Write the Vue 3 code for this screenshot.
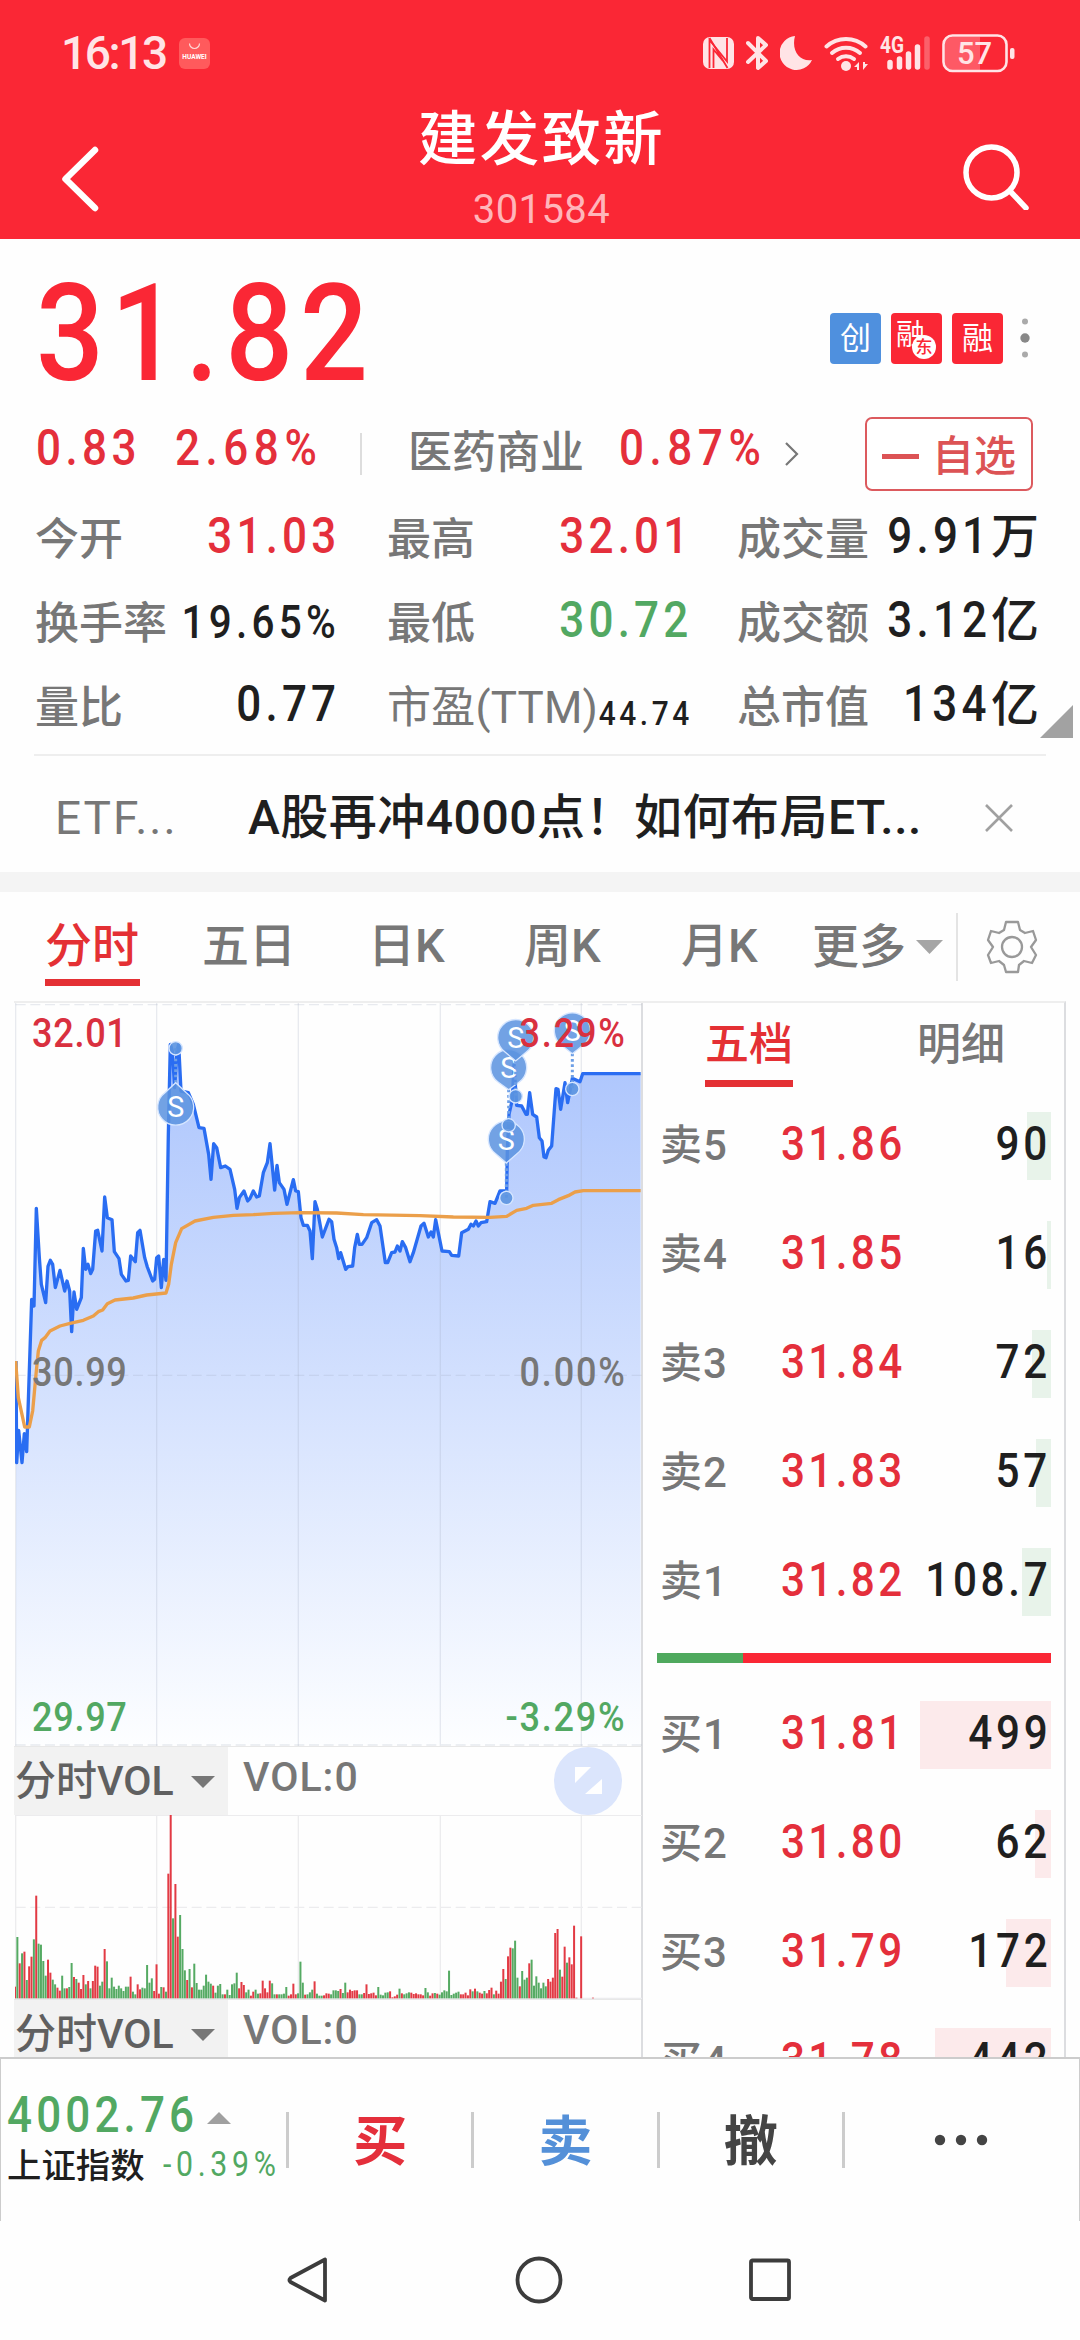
<template>
  <div class="page">
    <header class="header">
      <div class="status-bar">
        <span class="status-time">16:13</span>
        <svg class="app-badge" width="31" height="31" viewBox="0 0 31 31">
          <rect width="31" height="31" rx="6" fill="#ff5a5c" />
          <path d="M10.500 5.500a5 5 0 0 0 10 0" fill="none" stroke="#ffd9d6" stroke-width="1.200" />
          <text x="15.500" y="20.500" text-anchor="middle" class="badge-text">HUAWEI</text>
        </svg>
        <div class="status-icons">
          <svg class="ic-nfc" width="31" height="34" viewBox="0 0 31 34">
            <rect x="0" y="1" width="31" height="32" rx="7" fill="#ffe4e6" />
            <path d="M6.500 32V4L24 25.500V2" fill="none" stroke="#fa2735" stroke-width="1.800" />
            <path d="M6.500 2L24.500 32M10.500 32V13.500L20 25" fill="none" stroke="#fa2735" stroke-width="1.800" />
          </svg>
          <svg class="ic-bt" width="22" height="36" viewBox="0 0 22 36">
            <path d="M2 8l18 18-8 7V3l8 7L2 27" fill="none" stroke="#ffe4e6" stroke-width="4" stroke-linejoin="round" stroke-linecap="round" />
          </svg>
          <svg class="ic-moon" width="33" height="36" viewBox="0 0 33 36">
            <path d="M15 1A17 17 0 1 0 32 25C20 27 11 16 15 1z" fill="#ffe4e6" />
          </svg>
          <svg class="ic-wifi" width="45" height="36" viewBox="0 0 45 36">
            <g fill="none" stroke="#ffe4e6" stroke-width="4" stroke-linecap="round">
              <path d="M2.500 11.500a29 29 0 0 1 39 0" />
              <path d="M8 18a21 21 0 0 1 28 0" />
              <path d="M14 24a13 13 0 0 1 16 0" />
            </g>
            <circle cx="22" cy="31" r="5" fill="#ffe4e6" />
            <path d="M30 32l5-5v8h-2v-3zM44 29l-5 6v-8h2v2z" fill="#ffe4e6" />
          </svg>
          <svg class="ic-signal" width="51" height="36" viewBox="0 0 51 36">
            <text x="0" y="17.500" class="net-text" textLength="24" lengthAdjust="spacingAndGlyphs">4G</text>
            <g stroke="#ffe4e6" stroke-width="5.500" stroke-linecap="round">
              <path d="M10 27.500V32M19.500 24V32M28.500 19V32M37.500 12V32" />
              <path d="M47 4V32" opacity=".3" />
            </g>
          </svg>
          <svg class="ic-battery" width="74" height="39" viewBox="0 0 74 39">
            <path d="M10 3H38V36H10A7 7 0 0 1 3 29V10A7 7 0 0 1 10 3z" fill="#ff6b75" opacity=".75" />
            <rect x="1.500" y="1.500" width="63" height="35.500" rx="9" fill="none" stroke="#ffe4e6" stroke-width="2.600" />
            <rect x="68" y="14" width="4.500" height="11" rx="2" fill="#ffe4e6" />
            <text x="32.500" y="30" text-anchor="middle" class="battery-text">57</text>
          </svg>
        </div>
      </div>
      <div class="title-bar">
        <svg class="back" width="60" height="70" viewBox="0 0 60 70">
          <path d="M36 6L6.500 35L36 64" fill="none" stroke="#fff" stroke-width="6.500" stroke-linecap="round" stroke-linejoin="round" />
        </svg>
        <div class="title-box">
          <h1>建发致新</h1>
          <span class="code">301584</span>
        </div>
        <svg class="search" width="68" height="68" viewBox="0 0 68 68">
          <circle cx="30.500" cy="30.500" r="25.500" fill="none" stroke="#fff" stroke-width="5.500" />
          <path d="M49 49L65 66" stroke="#fff" stroke-width="5.500" stroke-linecap="round" />
        </svg>
      </div>
    </header>

    <section class="quote">
      <div class="price-row">
        <span class="price narrow">31.82</span>
        <div class="tags">
          <span class="tag blue">创</span>
          <span class="tag small">融<i>东</i></span>
          <span class="tag">融</span>
          <svg width="10" height="44" viewBox="0 0 10 44">
            <circle cx="5" cy="5.500" r="3" fill="#aaa" />
            <circle cx="5" cy="22" r="4.700" fill="#888" />
            <circle cx="5" cy="38.500" r="3" fill="#aaa" />
          </svg>
        </div>
      </div>

      <div class="change-row">
        <span class="num narrow up chg">0.83</span>
        <span class="num narrow up pct">2.68%</span>
        <i class="bar-line"></i>
        <span class="sector">医药商业</span>
        <span class="num narrow up sector-pct">0.87%</span>
        <svg class="arrow" width="16" height="26" viewBox="0 0 16 26">
          <path d="M2 2L13 13L2 24" fill="none" stroke="#777" stroke-width="2.200" />
        </svg>
        <button class="fav"><i></i>自选</button>
      </div>

      <div class="stats">
        <div v-for="s in stats" :key="s.label" class="stat">
          <span class="stat-label" :class="{ ttm: s.tiny }">{{ s.label }}</span>
          <span class="stat-value" :class="[s.tone, { mid: s.mid, tiny: s.tiny }]"><em class="narrow">{{ s.value }}</em><b v-if="s.unit">{{ s.unit }}</b></span>
        </div>
        <svg class="corner" width="33" height="33" viewBox="0 0 33 33"><path d="M33 0V33H0z" fill="#a2a2a2" /></svg>
      </div>

      <div class="news">
        <span class="news-tag">ETF...</span>
        <span class="news-title">A股再冲4000点！如何布局ET...</span>
        <svg width="30" height="30" viewBox="0 0 30 30">
          <path d="M2 2L28 28M28 2L2 28" stroke="#a0a0a0" stroke-width="2.600" />
        </svg>
      </div>
    </section>

    <nav class="tabs">
      <span v-for="(t, i) in tabs" :key="t" class="tab" :class="{ active: i === 0 }">{{ t }}</span>
      <span class="more">更多</span>
      <svg class="more-arrow" width="27" height="14" viewBox="0 0 27 14"><path d="M0 0H27L13.500 14z" fill="#a5a5a5" /></svg>
      <i class="tab-line"></i>
      <svg class="gear" width="52" height="54" viewBox="0 0 52 54">
        <path d="M20 2H32L34 10L39 13L47 11L50 20L45 27L50 35L46 43L38 41L33 45L32 52H20L18 45L13 41L5 43L2 35L7 27L2 20L5 11L13 13L18 10z" fill="none" stroke="#999" stroke-width="2.300" stroke-linejoin="round" />
        <circle cx="26" cy="27" r="10" fill="none" stroke="#999" stroke-width="2.300" />
      </svg>
    </nav>

    <main class="board">
      <section class="charts">
        <div class="chart-box">
          <!-- units are thirds of a pixel -->
          <svg width="627" height="743" viewBox="45 36 1881 2229">
            <defs>
              <linearGradient id="fade" x1="0" y1="248" x2="0" y2="2265" gradientUnits="userSpaceOnUse">
                <stop offset="0" stop-color="#afc7fd" />
                <stop offset="1" stop-color="#fdfeff" />
              </linearGradient>
            </defs>
            <polygon :points="area" fill="url(#fade)" />
            <g stroke="#9aa6bb" stroke-opacity=".22" stroke-width="4">
              <path d="M47 36V2265M470 36V2265M895 36V2265M1321 36V2265M1744 36V2265" />
              <path d="M47 41H1926M47 1153H1926M47 2262H1926" stroke-dasharray="30 14" />
            </g>
            <polyline :points="priceLine" fill="none" stroke="#2a6df2" stroke-width="10" stroke-linejoin="round" />
            <polyline :points="avgLine" fill="none" stroke="#eb9f4a" stroke-width="10" stroke-linejoin="round" />
            <g v-for="m in marks" :key="m.x + '-' + m.y">
              <path :d="`M${m.x} ${m.tip}V${m.dot}`" stroke="#6d9fe6" stroke-width="9" stroke-dasharray="8 8" />
              <path :d="pin(m)" fill="#5b93e0" fill-opacity=".86" stroke="#d6e6ff" stroke-width="4" />
              <circle :cx="m.x" :cy="m.dot" r="20" fill="#5b93e0" fill-opacity=".9" stroke="#d6e6ff" stroke-width="4" />
              <text :x="m.x" :y="m.y + 31" text-anchor="middle" class="pin-text">S</text>
            </g>
          </svg>
          <span class="axis narrow tl up">32.01</span>
          <span class="axis narrow tr up">3.29%</span>
          <span class="axis narrow ml">30.99</span>
          <span class="axis narrow mr">0.00%</span>
          <span class="axis narrow bl down">29.97</span>
          <span class="axis narrow br down">-3.29%</span>
        </div>

        <div class="ind-head">
          <span class="ind-name">分时VOL<svg width="24" height="12" viewBox="0 0 24 12"><path d="M0 0H24L12 12z" fill="#777" /></svg></span>
          <span class="ind-value">VOL:0</span>
          <span class="expand">
            <svg width="68" height="68" viewBox="0 0 68 68">
              <circle cx="34" cy="34" r="34" fill="#dbe5fc" />
              <path d="M21 20H37L21 36zM48 32V47H31z" fill="#fff" />
            </svg>
          </span>
        </div>
        <svg class="vol" width="627" height="184" viewBox="45 433 1881 552">
          <g stroke="#ececee" stroke-width="4">
            <path d="M47 433V983M470 433V983M895 433V983M1321 433V983M1744 433V983M45 434H1926M45 983H1926" />
            <path d="M47 710H1926" stroke-dasharray="30 14" />
          </g>
          <rect v-for="b in bars" :key="b.x" :x="b.x" :y="983 - b.h" width="6" :height="b.h" :fill="b.color" />
        </svg>
        <div class="ind-head">
          <span class="ind-name">分时VOL<svg width="24" height="12" viewBox="0 0 24 12"><path d="M0 0H24L12 12z" fill="#777" /></svg></span>
          <span class="ind-value">VOL:0</span>
        </div>
      </section>

      <section class="depth">
        <div class="depth-tabs">
          <span class="active">五档</span>
          <span>明细</span>
        </div>
        <div v-for="r in asks" :key="r.name" class="level">
          <span class="lv-name">{{ r.name }}</span>
          <span class="lv-price narrow">{{ r.price }}</span>
          <span class="lv-qty"><i class="sell" :style="{ width: r.w + 'px' }"></i><em class="narrow">{{ r.qty }}</em></span>
        </div>
        <div class="ratio"><i></i></div>
        <div v-for="r in bids" :key="r.name" class="level">
          <span class="lv-name">{{ r.name }}</span>
          <span class="lv-price narrow">{{ r.price }}</span>
          <span class="lv-qty"><i class="buy" :style="{ width: r.w + 'px' }"></i><em class="narrow">{{ r.qty }}</em></span>
        </div>
      </section>
    </main>

    <footer class="trade">
      <div class="index">
        <div class="index-top">
          <span class="narrow">4002.76</span>
          <svg width="24" height="12" viewBox="0 0 24 12"><path d="M12 0L24 12H0z" fill="#a0a0a0" /></svg>
        </div>
        <div class="index-sub">上证指数<span class="narrow">-0.39%</span></div>
      </div>
      <span class="act buy-act">买</span>
      <span class="act sell-act">卖</span>
      <span class="act">撤</span>
      <span class="act dots">
        <svg width="54" height="12" viewBox="0 0 54 12" fill="#444">
          <circle cx="6" cy="6" r="5.200" /><circle cx="27" cy="6" r="5.200" /><circle cx="48" cy="6" r="5.200" />
        </svg>
      </span>
    </footer>

    <div class="sys-nav">
      <svg width="44" height="50" viewBox="0 0 44 50"><path d="M39 4.500V45.500L4.500 27Q2.500 25 4.500 23z" fill="none" stroke="#3c3c3c" stroke-width="3.800" stroke-linejoin="round" /></svg>
      <svg width="50" height="50" viewBox="0 0 50 50"><circle cx="25" cy="25" r="21.500" fill="none" stroke="#3c3c3c" stroke-width="3.800" /></svg>
      <svg width="44" height="46" viewBox="0 0 44 46"><rect x="3" y="3.500" width="38" height="38.500" rx="1.500" fill="none" stroke="#3c3c3c" stroke-width="3.800" /></svg>
    </div>
  </div>
</template>

<script setup>
import { computed } from 'vue'

const stats = [
  { label: '今开', value: '31.03', tone: 'up' },
  { label: '最高', value: '32.01', tone: 'up' },
  { label: '成交量', value: '9.91', unit: '万' },
  { label: '换手率', value: '19.65%', mid: true },
  { label: '最低', value: '30.72', tone: 'down' },
  { label: '成交额', value: '3.12', unit: '亿' },
  { label: '量比', value: '0.77' },
  { label: '市盈(TTM)', value: '44.74', tiny: true },
  { label: '总市值', value: '134', unit: '亿' }
]

const tabs = ['分时', '五日', '日K', '周K', '月K']

const asks = [
  { name: '卖5', price: '31.86', qty: '90', w: 24 },
  { name: '卖4', price: '31.85', qty: '16', w: 4 },
  { name: '卖3', price: '31.84', qty: '72', w: 19 },
  { name: '卖2', price: '31.83', qty: '57', w: 15 },
  { name: '卖1', price: '31.82', qty: '108.7', w: 29 }
]

const bids = [
  { name: '买1', price: '31.81', qty: '499', w: 131 },
  { name: '买2', price: '31.80', qty: '62', w: 16 },
  { name: '买3', price: '31.79', qty: '172', w: 45 },
  { name: '买4', price: '31.78', qty: '442', w: 116 }
]

const priceLine = `48,1110 50,1415 56,1318 66,1415 73,1328 80,1382 95,925 102,945 109,652 118,800 124,880 137,935
144,826 151,808 158,820 166,890 180,838 194,900 201,870 209,900 215,1022 222,903 230,955 244,920 250,772 257,835
264,820 272,848 278,835 287,720 293,718 306,780 314,618 322,680 336,686 343,782 357,803 364,850 378,870 385,868
392,795 406,812 413,725 420,718 434,800 442,828 458,870 464,865 470,800 476,795 484,890 491,805 498,868 505,430
511,160 517,180 524,290 531,180 536,160 543,300 565,305 580,340 597,410 612,412 626,490 633,565 641,458 650,470
662,530 676,525 690,535 704,595 711,652 718,620 732,600 743,630 750,622 760,600 770,618 778,615 790,545 802,515
810,458 824,597 831,523 838,575 852,595 861,640 880,566 887,600 895,602 903,680 910,703 922,703 930,720 937,803
945,632 952,655 967,738 987,685 995,692 1002,745 1010,770 1016,803 1022,785 1037,835 1044,827 1058,825 1064,770
1072,730 1078,760 1086,760 1100,740 1115,695 1130,686 1140,705 1156,815 1163,815 1175,785 1185,783 1192,765
1200,780 1207,752 1217,770 1230,812 1240,785 1263,705 1272,697 1285,738 1293,723 1300,738 1307,686 1326,780
1348,782 1355,793 1376,795 1385,725 1405,715 1413,700 1420,705 1428,690 1435,705 1443,695 1460,692 1470,632
1485,637 1500,600 1520,600 1522,480 1527,370 1537,325 1542,220 1548,310 1550,343 1565,345 1578,370 1582,370
1589,305 1598,370 1610,378 1618,440 1626,450 1632,498 1638,500 1645,478 1655,465 1665,330 1668,293 1674,295
1682,355 1695,275 1703,335 1710,300 1717,262 1740,272 1748,248 1922,248`

const avgLine = `47,1110 55,1220 68,1280 74,1308 88,1308 98,1260 108,1150 115,1080 125,1048 135,1040 150,1020 180,1005
210,997 250,988 280,975 295,962 308,957 322,938 345,927 400,921 440,912 498,906 506,880 514,820 527,755 545,713
585,690 640,679 700,673 760,671 820,667 900,665 1010,666 1090,671 1260,674 1360,678 1470,679 1520,676 1550,658
1580,652 1600,643 1655,637 1675,626 1705,614 1725,603 1750,599 1922,599`

const area = computed(() => `${priceLine} 1922,2262 48,2262`)

// dot: the trade on the line, tip: where the pin points
const marks = [
  { x: 527, y: 348, tip: 275, dot: 172 },
  { x: 1519, y: 445, tip: 516, dot: 621 },
  { x: 1526, y: 230, tip: 296, dot: 403 },
  { x: 1547, y: 140, tip: 210, dot: 316 },
  { x: 1717, y: 120, tip: 188, dot: 294 }
]

function pin({ x, y, tip }) {
  const s = tip > y ? 1 : -1
  const sweep = s > 0 ? 1 : 0
  return `M${x - 32} ${y + s * 43}A54 54 0 1 ${sweep} ${x + 32} ${y + s * 43}L${x} ${tip}z`
}

const volumes = `r35 g184 r105 g135 r140 g55 r96 r125 g177 r308 g164 g161 g112 g68 r116 r77 g56 g42 r32 r23 g68 g30
r30 g34 g106 r64 g58 r47 r28 r70 g42 r52 g30 r52 r98 r95 g38 g50 r148 g111 g30 g62 g35 g28 g38 g30 g22 g35 g35 r65
g20 g12 r42 r27 g32 g30 g100 g47 g60 r22 r102 r14 g34 r33 g20 r374 r550 g240 r343 r185 g250 g148 g84 r55 g88 r33
g104 g46 g26 g26 g38 g71 g50 g44 r38 g17 g38 g43 g12 r12 g26 g10 g42 g45 g77 r30 r49 r40 g18 g26 r8 r20 g26 g14
r15 r53 r30 r18 r53 g45 g12 r12 g12 g12 g14 g34 r8 r12 r44 r12 g15 g110 g47 r11 g12 g18 g26 r51 g14 g8 g8 r9 r15
r14 g12 g24 g24 g22 r28 g16 g47 r18 r26 r22 r24 r24 g12 g12 r16 r42 r13 r15 r17 r9 g34 g11 g9 g17 g18 r21 r3 r6
r11 g29 r15 g12 g15 g18 r17 r13 r15 r12 r12 r9 g31 g18 r8 r15 g16 r14 g11 g18 g24 g21 g83 g10 g14 g17 g20 r12 r12
r17 r9 r27 g21 r29 g21 r17 r14 g22 r15 r25 r32 g12 r23 r14 r50 r88 g58 r126 r152 g150 g173 g62 r36 g82 g56 g62
r105 g116 g38 g66 g47 g30 g47 g36 r58 r50 r62 r196 r208 g86 r65 r155 g107 r123 r102 r218 r2 r0 r186 r0 r0 r0 r0 r2`

const bars = volumes.split(/\s+/).map((v, i) => ({
  x: 42 + i * 7.077,
  h: Number(v.slice(1)),
  color: v[0] === 'r' ? '#e23a44' : '#55aa63'
}))
</script>

<style>
body {
  background: #fff;
}
</style>

<style scoped>
.page {
  width: 1080px;
  height: 2340px;
  overflow: hidden;
  background: #fefefe;
  color: #1f1f1f;
  font-family: Roboto, "Noto Sans CJK SC", sans-serif;
  font-weight: 500;
}

.page * {
  box-sizing: border-box;
}

svg {
  display: block;
  flex: none;
}

i, em {
  font-style: normal;
}

.up { color: #e42f3b; }
.down { color: #52a862; }

/* slimmer digits for quotes */
.narrow {
  display: inline-block;
  transform: scaleX(0.88);
  transform-origin: left center;
}

/* header */
.header {
  height: 239px;
  background: #fa2735;
  color: #fff;
}

.status-bar {
  height: 106px;
  padding: 0 64px 0 61px;
  display: flex;
  align-items: center;
}

.status-time {
  width: 118px;
  font-size: 46px;
  line-height: 106px;
  letter-spacing: -2.4px;
  color: #ffe4e6;
}

.badge-text {
  font-size: 6.5px;
  font-weight: 700;
  fill: #fff;
}

.status-icons {
  margin-left: auto;
  display: flex;
  align-items: center;
}

.ic-bt { margin-left: 12px; }
.ic-moon { margin-left: 12px; }
.ic-wifi { margin-left: 11px; }
.ic-signal { margin-left: 11px; overflow: visible; }
.ic-battery { margin-left: 11px; }

.net-text {
  font-size: 24px;
  font-weight: 700;
  fill: #ffe4e6;
}

.battery-text {
  font-size: 31px;
  fill: #ffe4e6;
}

.title-bar {
  height: 133px;
  display: flex;
  align-items: flex-start;
  justify-content: space-between;
  padding: 0 51px 0 59px;
}

.back {
  margin-top: 38px;
}

.title-box {
  width: 400px;
  padding-left: 3px;
  text-align: center;
}

.title-box h1 {
  margin: 0;
  font-size: 59.5px;
  line-height: 68px;
  font-weight: 500;
  letter-spacing: 2.2px;
}

.code {
  display: block;
  font-size: 40px;
  line-height: 48px;
  margin-top: 12px;
  font-weight: 400;
  letter-spacing: 0.4px;
  color: #ffb5ba;
}

.search {
  margin-top: 36px;
}

/* quote */
.price-row {
  height: 175px;
  padding: 0 50px 0 36px;
  display: flex;
  justify-content: space-between;
}

.price {
  width: 360px;
  font-size: 136px;
  line-height: 190px;
  letter-spacing: 7.6px;
  color: #fa2735;
}

.tags {
  display: flex;
  gap: 10px;
  padding-top: 74px;
}

.tag {
  width: 51px;
  height: 51px;
  line-height: 52px;
  border-radius: 4px;
  background: #fa2735;
  color: #fff;
  font-size: 31px;
  font-weight: 400;
  text-align: center;
  position: relative;
}

.tag.blue { background: #4f90de; }

.tag.small {
  font-size: 29px;
  line-height: 44px;
  text-align: left;
  padding-left: 5px;
}

.tag i {
  position: absolute;
  right: 6px;
  bottom: 5px;
  width: 24px;
  height: 24px;
  border-radius: 50%;
  background: #fff;
  color: #fa2735;
  font-size: 17px;
  font-weight: 500;
  line-height: 25px;
  text-align: center;
}

.tags svg {
  margin: 3px 0 0 7px;
}

.change-row {
  height: 82px;
  padding-left: 36px;
  display: flex;
  align-items: center;
  padding-bottom: 8px;
}

.num {
  flex: none;
  font-size: 50px;
  line-height: 66px;
  letter-spacing: 5px;
  padding-bottom: 7px;
}

.chg { width: 139px; }
.pct { width: 185px; letter-spacing: 6.3px; }
.sector-pct { width: 148px; letter-spacing: 6.3px; }

.bar-line {
  width: 2px;
  height: 42px;
  margin-top: 6px;
  background: #ddd;
}

.sector {
  width: 257px;
  padding-left: 46px;
  font-size: 44px;
  line-height: 70px;
  color: #777;
  white-space: nowrap;
  margin-top: 3px;
}

.arrow {
  margin: 6px 0 0 17px;
}

.fav {
  width: 168px;
  height: 74px;
  margin: 0 47px 0 auto;
  position: relative;
  top: 3px;
  padding: 5px 0 0 15px;
  border: 2px solid #dc5a5e;
  border-radius: 7px;
  background: #fff;
  display: flex;
  align-items: center;
  font: 500 42px/66px Roboto, "Noto Sans CJK SC", sans-serif;
  color: #dc5355;
}

.fav i {
  width: 37px;
  height: 5px;
  margin-right: 13px;
  background: #dc5355;
}

.stats {
  position: relative;
  display: grid;
  grid-template-columns: 299px 352px 350px;
  grid-auto-rows: 84px;
  padding-left: 35px;
  height: 258px;
}

.stat {
  display: flex;
  justify-content: space-between;
  align-items: center;
  white-space: nowrap;
}

.stat:nth-child(3n + 2) { padding-left: 53px; }
.stat:nth-child(3n) { padding-left: 51px; }

.stat-label {
  font-size: 44px;
  line-height: 84px;
  padding-top: 4px;
  color: #777;
}

.stat-value {
  font-size: 50px;
  line-height: 84px;
  margin-left: -60px;
  padding-bottom: 4px;
}

.stat-value em {
  letter-spacing: 4.8px;
  transform-origin: right center;
}

.stat-value em:last-child {
  margin-right: -6.5px;
}

.stat-value b {
  font-size: 48px;
  font-weight: 500;
  margin-right: -3px;
}

.stat-value.mid {
  font-size: 46px;
  padding-bottom: 0;
}

.stat-label.ttm {
  font-weight: 400;
  letter-spacing: 0.2px;
}

.stat-value.tiny {
  font-size: 34px;
  padding: 14px 0 0;
}

.stat-value.tiny em {
  letter-spacing: 4px;
}

.corner {
  position: absolute;
  right: 7px;
  bottom: 16px;
}

.news {
  height: 118px;
  margin: 0 34px 0 34px;
  border-top: 2px solid #eee;
  display: flex;
  align-items: center;
  padding-top: 7px;
  line-height: 70px;
  white-space: nowrap;
}

.news-tag {
  width: 214px;
  padding-left: 21px;
  font-size: 46px;
  font-weight: 400;
  letter-spacing: 2px;
  color: #777;
}

.news-title {
  width: 736px;
  font-size: 48px;
  letter-spacing: 0.5px;
}

/* tabs */
.tabs {
  height: 129px;
  border-top: 20px solid #f4f4f4;
  display: flex;
  align-items: center;
  padding-left: 45px;
  font-size: 47px;
  line-height: 70px;
  color: #777;
}

.tab {
  height: 109px;
  line-height: 108px;
  width: 95px;
  margin-right: 62px;
}

.tab:nth-child(3) { margin-left: 9px; margin-right: 61px; }
.tab:nth-child(4) { margin-right: 62px; }
.tab:nth-child(5) { margin-right: 36px; }

.tab.active {
  color: #e43034;
  background: linear-gradient(#e43034, #e43034) 0 87px / 95px 7px no-repeat;
}

.more-arrow {
  margin-left: 10px;
}

.tab-line {
  width: 2px;
  height: 68px;
  margin-left: 13px;
  background: #e4e4e4;
}

.gear {
  margin-left: 28px;
}

/* board */
.board {
  width: 1052px;
  height: 1056px;
  margin-left: 14px;
  overflow: hidden;
  display: flex;
  border-top: 2px solid #eee;
  border-right: 2px solid #dcdde0;
}

.charts {
  width: 629px;
  flex: none;
  border-right: 2px solid #dcdde0;
}

.chart-box {
  position: relative;
  padding-left: 1px;
}

.axis {
  position: absolute;
  font-size: 41px;
  line-height: 50px;
  letter-spacing: 0.8px;
  color: #777;
}

.axis.up { color: #d9303f; }
.axis.down { color: #52a862; }
.tl, .ml, .bl { left: 18px; }
.tr, .mr, .br { right: 15px; letter-spacing: 2px; transform-origin: right center; }
.tl, .tr { top: 5px; }
.ml, .mr { top: 344px; }
.bl, .br { top: 689px; }

.pin-text {
  font-size: 86px;
  font-weight: 400;
  fill: #fff;
}

.ind-head {
  height: 69px;
  display: flex;
  border-top: 1px solid #e8e8e8;
}

.ind-name {
  width: 214px;
  background: #f2f2f2;
  color: #606060;
  font-size: 41px;
  line-height: 66px;
  padding-left: 1px;
  display: flex;
  align-items: center;
}

.ind-name svg {
  margin: 1px 0 0 17px;
}

.ind-value {
  margin-left: 15px;
  font-size: 41px;
  line-height: 61px;
  letter-spacing: 1px;
  color: #777;
}

.expand {
  margin: 0 19px 0 auto;
}

.vol {
  margin-left: 1px;
}

/* depth */
.depth {
  width: 421px;
  padding: 0 13px 0 14px;
}

.depth-tabs {
  display: flex;
  height: 109px;
  padding-left: 48px;
  gap: 124px;
  font-size: 44px;
  color: #777;
}

.depth-tabs span {
  height: 84px;
  line-height: 85px;
  border-bottom: 7px solid transparent;
}

.depth-tabs .active {
  color: #e43034;
  border-color: #e43034;
}

.level {
  display: grid;
  grid-template-columns: 124px 110px 1fr;
  height: 68px;
  margin-bottom: 41px;
  line-height: 64px;
}

.lv-name {
  font-size: 42px;
  letter-spacing: 1px;
  padding: 2px 0 0 3px;
  color: #777;
}

.lv-price {
  font-size: 48px;
  letter-spacing: 3.8px;
  color: #e42f3b;
}

.lv-qty {
  position: relative;
  font-size: 48px;
  letter-spacing: 4.2px;
  text-align: right;
}

.lv-qty i {
  position: absolute;
  right: 0;
  top: 0;
  height: 68px;
}

.lv-qty em {
  position: relative;
  transform-origin: right center;
}

.sell { background: #e8f3ea; }
.buy { background: #fceaeb; }

.ratio {
  height: 10px;
  margin: -4px 0 38px;
  background: #fa2735;
}

.ratio i {
  display: block;
  width: 86px;
  height: 10px;
  background: #4fa95e;
}

/* trade bar */
.trade {
  height: 164px;
  border: 1px solid #ccc;
  border-top-width: 2px;
  border-bottom: 0;
  display: flex;
  align-items: center;
}

.index {
  width: 285px;
  height: 100%;
  padding: 29px 0 0 6px;
  white-space: nowrap;
}

.index-top {
  display: flex;
  align-items: center;
  font-size: 50px;
  line-height: 54px;
  color: #52a862;
}

.index-top .narrow {
  width: 190px;
  letter-spacing: 4.7px;
}

.index-top svg {
  margin: 6px 0 0 10px;
}

.index-sub {
  font-size: 34.4px;
  line-height: 48px;
}

.index-sub span {
  margin-left: 18px;
  position: relative;
  top: -2px;
  letter-spacing: 5.3px;
  font-weight: 400;
  color: #52a862;
}

.act {
  width: 185.3px;
  height: 56px;
  border-left: 3px solid #ccc;
  display: flex;
  align-items: center;
  justify-content: center;
  padding-bottom: 5px;
  font-size: 54px;
  font-weight: 700;
  color: #444;
}

.act.dots {
  width: 236px;
  padding-bottom: 0;
}

.buy-act { color: #e42f3b; }
.sell-act { color: #5490d8; }

.sys-nav {
  height: 118px;
  padding: 0 288px 0 286px;
  display: flex;
  align-items: center;
  justify-content: space-between;
}
</style>
